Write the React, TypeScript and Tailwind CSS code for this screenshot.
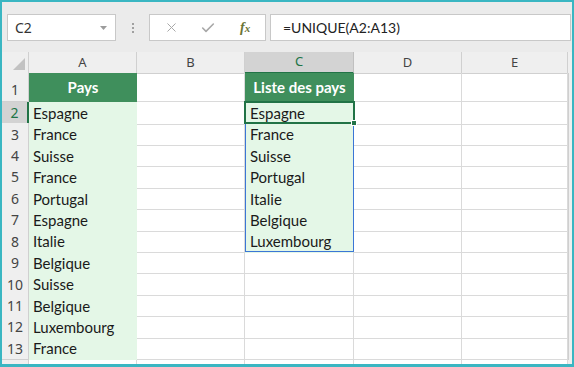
import React from 'react'
import { X, Check } from 'lucide-react'

const colA = [
  'Espagne',
  'France',
  'Suisse',
  'France',
  'Portugal',
  'Espagne',
  'Italie',
  'Belgique',
  'Suisse',
  'Belgique',
  'Luxembourg',
  'France',
]

const colC = ['Espagne', 'France', 'Suisse', 'Portugal', 'Italie', 'Belgique', 'Luxembourg']

const cellFont = { fontFamily: 'Lato, "Open Sans", sans-serif' }
const uiFont = { fontFamily: '"Noto Sans", "Open Sans", sans-serif' }

const App: React.FC = () => {
  const letters = ['A', 'B', 'C', 'D', 'E']

  return (
    <div className="w-[574px] h-[367px] overflow-hidden border-2 border-b-[3px] border-[#3ab6c2] bg-white">
      {/* formula bar area */}
      <div className="h-[50px] bg-[#ebebeb] flex items-start pt-[12px] pl-[5px] pr-[1px]" style={uiFont}>
        <div className="w-[109px] h-[27px] bg-white border border-[#c8c8c8] flex items-center pl-[7px] pr-[8px]">
          <span className="text-[14px] text-[#333] flex-1">C2</span>
          <svg width="7" height="4" viewBox="0 0 7 4">
            <path d="M0 0 L7 0 L3.5 4 Z" fill="#9c9c9c" />
          </svg>
        </div>
        <div className="w-[33px] h-[27px] flex flex-col items-center justify-center gap-[2px]">
          <span className="w-[2px] h-[2px] bg-[#a0a0a0]" />
          <span className="w-[2px] h-[2px] bg-[#a0a0a0]" />
          <span className="w-[2px] h-[2px] bg-[#a0a0a0]" />
        </div>
        <div className="w-[117px] h-[27px] bg-white border border-[#c8c8c8] flex items-center">
          <div className="w-[40px] flex justify-center pl-[3px]">
            <X size={15} strokeWidth={1.6} className="text-[#a8a8a8]" />
          </div>
          <div className="w-[36px] flex justify-center">
            <Check size={16} strokeWidth={2.4} className="text-[#a8a8a8]" />
          </div>
          <div className="w-[40px] flex justify-center">
            <span
              className="italic font-bold text-[#6a7336] text-[14px] leading-none"
              style={{ fontFamily: '"Liberation Serif", serif' }}
            >
              f<span className="text-[11px]">x</span>
            </span>
          </div>
        </div>
        <div className="flex-1 ml-[4px] h-[27px] bg-white border border-[#c8c8c8] flex items-center pl-[12px]">
          <span className="text-[14px] text-[#222]" style={cellFont}>
            =UNIQUE(A2:A13)
          </span>
        </div>
      </div>

      {/* sheet */}
      <div className="relative">
        {/* column headers */}
        <div className="grid grid-cols-[27px_108px_108px_109px_108px_106px_1fr] h-[21px]" style={uiFont}>
          <div className="bg-[#efefef] border-r border-b border-[#d0d0d0] flex items-end justify-end pr-[3px] pb-[3px]">
            <svg width="12" height="12" viewBox="0 0 12 12">
              <path d="M12 0 L12 12 L0 12 Z" fill="#c2c2c2" />
            </svg>
          </div>
          {letters.map((l) => (
            <div
              key={l}
              className={
                l === 'C'
                  ? 'bg-[#d3d3d3] border-r border-[#c0c0c0] border-b-2 border-b-[#217346] flex items-center justify-center text-[13px] text-[#217346]'
                  : 'bg-[#efefef] border-r border-b border-[#d0d0d0] flex items-center justify-center text-[13px] text-[#444]'
              }
            >
              {l}
            </div>
          ))}
          <div className="bg-[#efefef] border-b border-[#d0d0d0]" />
        </div>

        {/* row 1 */}
        <div className="grid grid-cols-[27px_108px_108px_109px_108px_106px_1fr] h-[29px]">
          <div
            className="bg-[#efefef] border-r border-b border-[#d0d0d0] flex items-end justify-center pb-[1px] text-[14px] text-[#444]"
            style={uiFont}
          >
            1
          </div>
          <div
            className="bg-[#3f8f5c] border-b border-[#3f8f5c] flex items-center justify-center text-white font-bold text-[15px]"
            style={cellFont}
          >
            Pays
          </div>
          <div className="border-r border-b border-[#dadada]" />
          <div
            className="bg-[#3f8f5c] border-b border-[#3f8f5c] flex items-center justify-center text-white font-bold text-[15px]"
            style={cellFont}
          >
            Liste des pays
          </div>
          <div className="border-r border-b border-[#dadada]" />
          <div className="border-r border-b border-[#dadada]" />
          <div className="bg-[#efefef] border-l border-[#cfcfcf]" />
        </div>

        {/* data rows */}
        {colA.map((a, i) => {
          const n = i + 2
          const c = colC[i]
          const selected = n === 2
          return (
            <div key={n} className="grid grid-cols-[27px_108px_108px_109px_108px_106px_1fr] h-[21.42px]">
              <div
                className={
                  selected
                    ? 'bg-[#d3d3d3] border-b border-[#c0c0c0] border-r-2 border-r-[#217346] flex items-center justify-center text-[14px] text-[#217346]'
                    : 'bg-[#efefef] border-r border-b border-[#d0d0d0] flex items-center justify-center text-[14px] text-[#444]'
                }
                style={uiFont}
              >
                {n}
              </div>
              <div className="bg-[#e4f7e7] flex items-center pl-[4px] text-[15px] text-[#1a1a1a]" style={cellFont}>
                {a}
              </div>
              <div className="border-r border-b border-[#dadada]" />
              {c ? (
                <div className="bg-[#e4f7e7] flex items-center pl-[5px] text-[15px] text-[#1a1a1a]" style={cellFont}>
                  {c}
                </div>
              ) : (
                <div className="border-r border-b border-[#dadada]" />
              )}
              <div className="border-r border-b border-[#dadada]" />
              <div className="border-r border-b border-[#dadada]" />
              <div className="bg-[#efefef] border-l border-[#cfcfcf]" />
            </div>
          )
        })}

        {/* row 14 (partial) */}
        <div className="grid grid-cols-[27px_108px_108px_109px_108px_106px_1fr] h-[21px] border-t border-[#d0d0d0]">
          <div className="bg-[#efefef] border-r border-[#d0d0d0]" />
          <div className="border-r border-[#dadada]" />
          <div className="border-r border-[#dadada]" />
          <div className="border-r border-[#dadada]" />
          <div className="border-r border-[#dadada]" />
          <div className="border-r border-[#dadada]" />
          <div className="bg-[#efefef]" />
        </div>

        {/* spill range outline C2:C8 */}
        <div className="absolute left-[243px] top-[50px] w-[109px] h-[150px] border border-[#3b76d6] pointer-events-none" />
        {/* active cell C2 */}
        <div className="absolute left-[242px] top-[49px] w-[111px] h-[23px] border-2 border-[#217346] pointer-events-none" />
        <div className="absolute left-[349px] top-[68px] w-[6px] h-[6px] bg-[#217346] border border-white pointer-events-none" />
      </div>
    </div>
  )
}

export default App
